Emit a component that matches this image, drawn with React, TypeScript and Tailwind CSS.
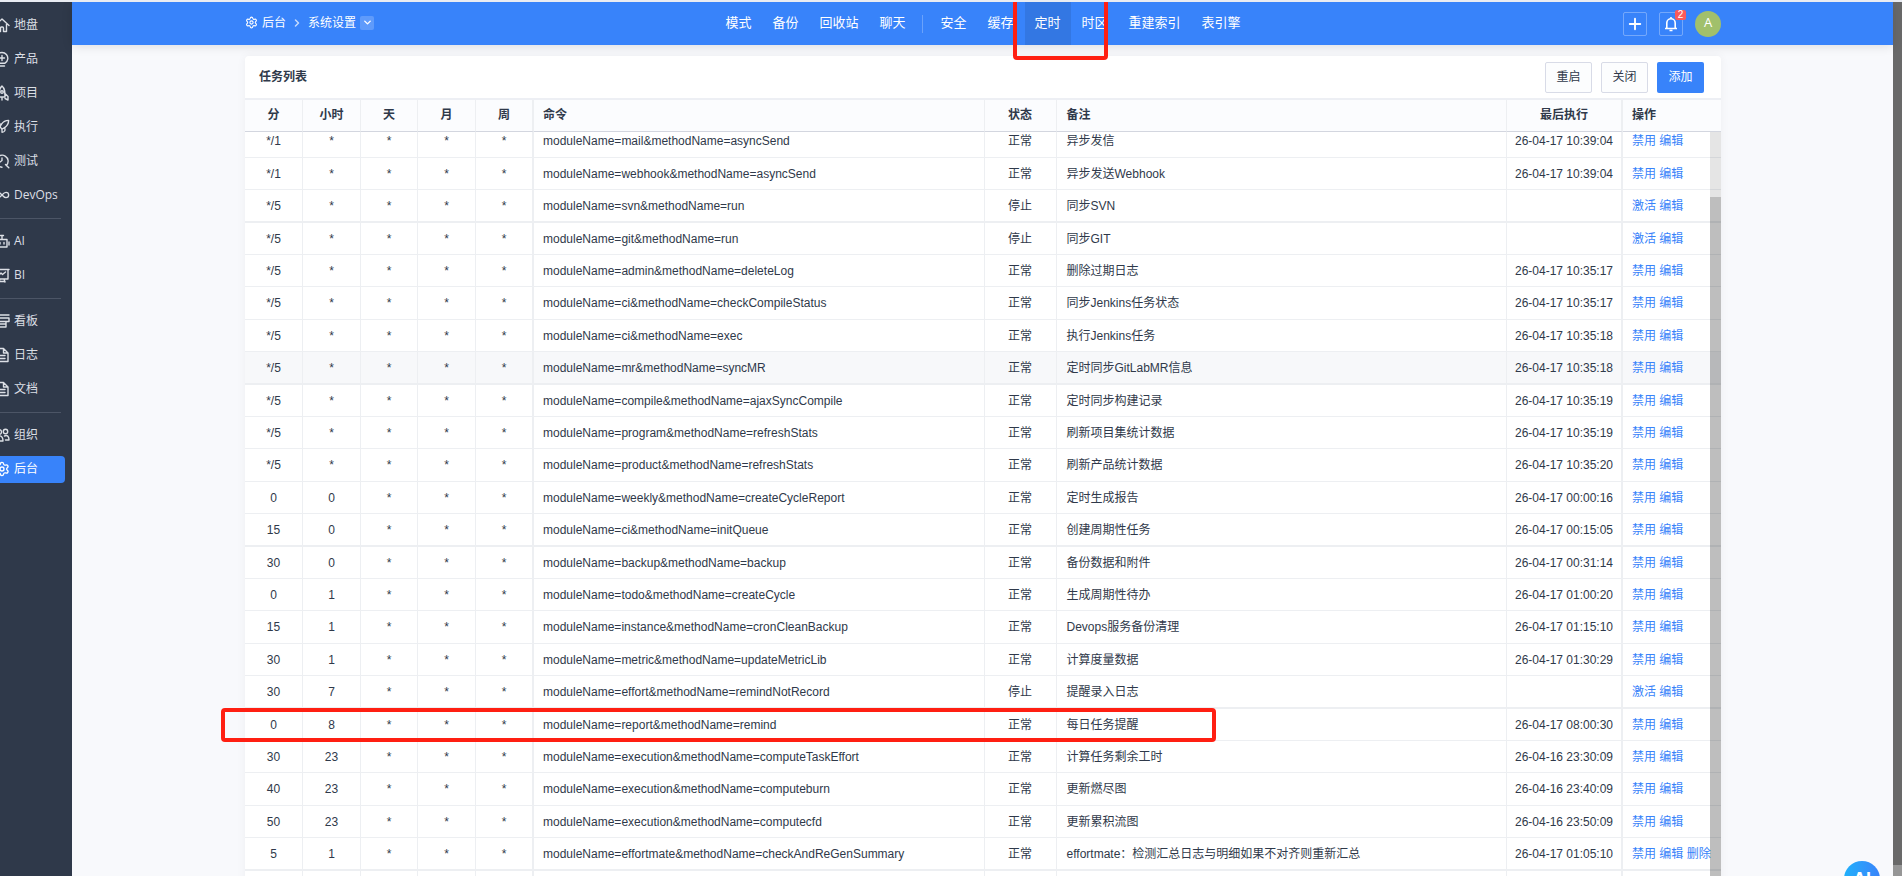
import React from "react";
import type { ReactNode } from "react";
import { Rocket, Infinity as InfinityIcon, Settings, ChevronRight, ChevronDown, Plus, Bell } from "lucide-react";

function Glyph({ children }: { children: ReactNode }) {
  return (
    <svg viewBox="0 0 16 16" fill="none" stroke="currentColor" strokeWidth="1.4" strokeLinejoin="round" strokeLinecap="round" className="size-4" aria-hidden="true">
      {children}
    </svg>
  );
}

const homeIcon = <Glyph><path d="M1 8.5 8 2l7 6.500M3.500 7v7.500H6.500V11a1 1 0 0 1 1-1h1a1 1 0 0 1 1 1v3.500h3V7" /></Glyph>;
const bulbIcon = <Glyph><path d="M5 12.200a5.800 5.800 0 1 1 6 0M5 12.200h6M5.500 15h5M8 4.500v5M5.500 7h5" /></Glyph>;
const projectIcon = <Glyph><path d="M8 1C5 3.500 5 7 5 12h6c0-5 0-8.500-3-11zM5 8.500 2 11.500V15l3-1.500M11 8.500l3 3V15l-3-1.500M8 12v3" /><circle cx="8" cy="7" r="1.300" /></Glyph>;
const testIcon = <Glyph><path d="M12.300 12.500A6 6 0 1 0 8 14.200M11.500 11.500l3.300 3.300M8 5v2.500L6 9" /></Glyph>;
const botIcon = <Glyph><path d="M3 6.500h10V14H3zM8 6.500V3M6.500 2.500h3M1 9v3M15 9v3M6 9.500v1.500M10 9.500v1.500" /></Glyph>;
const chartIcon = <Glyph><path d="M1 2.500h14M2 2.500v9.500h12V2.500M5 8l2-2 1.500 1.500L11.500 5M6 12l-1 3M10 12l1 3M5 14.500h6" /></Glyph>;
const boardIcon = <Glyph><path d="M1 2h14M1 5h14v3.500H1zM3 8.500h9V14H3zM3 11h9" /></Glyph>;
const fileIcon = <Glyph><path d="M2 1.500h7.500L14 6v8.500H2zM9.500 1.500V6H14M5 8.500h6M5 11.500h6" /></Glyph>;
const usersIcon = <Glyph><circle cx="5" cy="5" r="2.500" /><circle cx="11.500" cy="4.500" r="2.200" /><path d="M1 14c0-7 8-7 8 0zM10.500 9c3-1.500 4.500 1 4.500 4h-3.500" /></Glyph>;

type MenuItem = { label: string; icon: ReactNode; active?: boolean };

const menuGroups: MenuItem[][] = [
  [
    { label: "地盘", icon: homeIcon },
    { label: "产品", icon: bulbIcon },
    { label: "项目", icon: projectIcon },
    { label: "执行", icon: <Rocket className="size-4" /> },
    { label: "测试", icon: testIcon },
    { label: "DevOps", icon: <InfinityIcon className="size-4" /> },
  ],
  [
    { label: "AI", icon: botIcon },
    { label: "BI", icon: chartIcon },
  ],
  [
    { label: "看板", icon: boardIcon },
    { label: "日志", icon: fileIcon },
    { label: "文档", icon: fileIcon },
  ],
  [
    { label: "组织", icon: usersIcon },
    { label: "后台", icon: <Settings className="size-4" />, active: true },
  ],
];

const navGroups = [
  ["模式", "备份", "回收站", "聊天"],
  ["安全", "缓存", "定时", "时区", "重建索引", "表引擎"],
];

type Job = {
  minute: string;
  hour: string;
  command: string;
  note: string;
  last: string;
  stopped?: boolean;
  removable?: boolean;
  hovered?: boolean;
};

const job = (minute: string, hour: string, module: string, method: string, note: string, last: string, extra: Partial<Job> = {}): Job => ({
  minute, hour, command: `moduleName=${module}&methodName=${method}`, note, last, ...extra,
});

const jobs: Job[] = [
  job("*/1", "*", "mail", "asyncSend", "异步发信", "26-04-17 10:39:04"),
  job("*/1", "*", "webhook", "asyncSend", "异步发送Webhook", "26-04-17 10:39:04"),
  job("*/5", "*", "svn", "run", "同步SVN", "", { stopped: true }),
  job("*/5", "*", "git", "run", "同步GIT", "", { stopped: true }),
  job("*/5", "*", "admin", "deleteLog", "删除过期日志", "26-04-17 10:35:17"),
  job("*/5", "*", "ci", "checkCompileStatus", "同步Jenkins任务状态", "26-04-17 10:35:17"),
  job("*/5", "*", "ci", "exec", "执行Jenkins任务", "26-04-17 10:35:18"),
  job("*/5", "*", "mr", "syncMR", "定时同步GitLabMR信息", "26-04-17 10:35:18", { hovered: true }),
  job("*/5", "*", "compile", "ajaxSyncCompile", "定时同步构建记录", "26-04-17 10:35:19"),
  job("*/5", "*", "program", "refreshStats", "刷新项目集统计数据", "26-04-17 10:35:19"),
  job("*/5", "*", "product", "refreshStats", "刷新产品统计数据", "26-04-17 10:35:20"),
  job("0", "0", "weekly", "createCycleReport", "定时生成报告", "26-04-17 00:00:16"),
  job("15", "0", "ci", "initQueue", "创建周期性任务", "26-04-17 00:15:05"),
  job("30", "0", "backup", "backup", "备份数据和附件", "26-04-17 00:31:14"),
  job("0", "1", "todo", "createCycle", "生成周期性待办", "26-04-17 01:00:20"),
  job("15", "1", "instance", "cronCleanBackup", "Devops服务备份清理", "26-04-17 01:15:10"),
  job("30", "1", "metric", "updateMetricLib", "计算度量数据", "26-04-17 01:30:29"),
  job("30", "7", "effort", "remindNotRecord", "提醒录入日志", "", { stopped: true }),
  job("0", "8", "report", "remind", "每日任务提醒", "26-04-17 08:00:30"),
  job("30", "23", "execution", "computeTaskEffort", "计算任务剩余工时", "26-04-16 23:30:09"),
  job("40", "23", "execution", "computeburn", "更新燃尽图", "26-04-16 23:40:09"),
  job("50", "23", "execution", "computecfd", "更新累积流图", "26-04-16 23:50:09"),
  job("5", "1", "effortmate", "checkAndReGenSummary", "effortmate：检测汇总日志与明细如果不对齐则重新汇总", "26-04-17 01:05:10", { removable: true }),
];

function Sidebar() {
  return (
    <aside className="w-[72px] shrink-0 bg-[#2f394a] pt-[6px] font-['Open_Sans','Noto_Sans_CJK_SC',sans-serif] leading-4 text-[#dcdfe5]">
      {menuGroups.map((group, i) => (
        <ul key={i} className={i ? "mt-[6px] mr-[11px] border-t border-[#4c5566] pt-[5px]" : "mr-[11px]"}>
          {group.map(({ label, icon, active }) => (
            <li key={label} className="-mr-1 flex h-[34px] items-center">
              <a
                href="#"
                className={
                  active
                    ? "flex h-[27px] w-full items-center gap-1 rounded-r bg-[#3883fa] text-white"
                    : "flex h-[27px] w-full items-center gap-1"
                }
              >
                <span className="-ml-[6px] shrink-0">{icon}</span>
                <span>{label}</span>
              </a>
            </li>
          ))}
        </ul>
      ))}
    </aside>
  );
}

function TopBar() {
  return (
    <header className="relative grid h-[43px] grid-cols-[1fr_auto_1fr] items-center bg-[#3883fa] pr-[172px] pl-[173px] text-white shadow-[0_1px_10px_rgba(0,0,0,0.12)]">
      <nav className="flex items-center pb-[2px]" aria-label="breadcrumb">
        <Settings className="size-[13px]" />
        <a href="#" className="ml-1">后台</a>
        <ChevronRight className="mx-[5px] size-3 opacity-70" strokeWidth={3} />
        <a href="#">系统设置</a>
        <button type="button" aria-label="切换" className="ml-1 grid size-[14px] place-items-center rounded-xs bg-white/20">
          <ChevronDown className="size-[11px]" strokeWidth={3} />
        </button>
      </nav>
      <nav className="flex h-full items-center text-[13px]">
        {navGroups.map((group, i) => (
          <div key={i} className="flex h-full items-center">
            {i > 0 && <span className="mx-[7px] h-[18px] w-px bg-white/25" />}
            <div className="flex h-full gap-px">
              {group.map((label) => (
                <a
                  key={label}
                  href="#"
                  className={
                    label === "定时"
                      ? "flex items-center bg-[#3377e3] px-[10px] pb-[2px]"
                      : "flex items-center px-[10px] pb-[2px]"
                  }
                >
                  {label}
                </a>
              ))}
            </div>
          </div>
        ))}
      </nav>
      <div className="flex items-center justify-end gap-3">
        <button type="button" aria-label="新建" className="grid size-6 place-items-center rounded-xs border border-white/30">
          <Plus className="size-[18px]" strokeWidth={2.5} />
        </button>
        <button type="button" aria-label="消息" className="relative grid size-6 place-items-center rounded-xs border border-white/30">
          <svg viewBox="0 0 16 16" fill="none" stroke="currentColor" strokeWidth="1.600" className="size-4" aria-hidden="true">
            <path d="M2 12.500h12M3.800 12.500V7a4.200 4.200 0 0 1 8.400 0v5.500M8 2.800V1M6.500 14.500h3" />
          </svg>
          <span className="absolute -top-[3px] -right-1 h-[10px] w-[11px] rounded-xs bg-[#fb5a5a] text-center text-[10px] leading-[10px]">2</span>
        </button>
        <a href="#" className="grid size-[26px] place-items-center rounded-full bg-[#a1c06b] pb-[2px] font-['Open_Sans',sans-serif] text-[13px]">A</a>
      </div>
    </header>
  );
}

const cell = "border-r border-[#edeff2] text-center";
const thick = "border-r-2 border-[#edeff2]";

function JobTable() {
  return (
    <table className="w-full table-fixed border-separate border-spacing-0">
      <colgroup>
        <col className="w-[58px]" />
        <col className="w-[58px]" />
        <col className="w-[57px]" />
        <col className="w-[58px]" />
        <col className="w-[58px]" />
        <col />
        <col className="w-[72px]" />
        <col />
        <col className="w-[116px]" />
        <col className="w-[98px]" />
      </colgroup>
      <thead>
        <tr className="h-8 bg-[#fbfcfe] text-[#2f394a] [&>th]:border-b [&>th]:border-b-[#d3d6df] [&>th]:pb-[2px]">
          <th className={cell}>分</th>
          <th className={cell}>小时</th>
          <th className={cell}>天</th>
          <th className={cell}>月</th>
          <th className={`${thick} text-center`}>周</th>
          <th className="border-r border-[#edeff2] pl-[9px] text-left">命令</th>
          <th className={cell}>状态</th>
          <th className="border-r border-[#edeff2] pl-[10px] text-left">备注</th>
          <th className={`${thick} text-center`}>最后执行</th>
          <th className="pl-[9px] text-left">操作</th>
        </tr>
      </thead>
      <tbody className="[&_td]:border-b [&_td]:border-b-[#edeff2] [&>tr]:h-8 [&>tr:first-child]:h-[26px]! [&>tr:first-child>td]:pb-[7px] [&>tr:nth-child(5n+1)]:h-[33px] [&>tr:nth-child(5n+3)]:h-[33px] [&>tr:nth-child(5n+3)>td]:border-b-2">
        {jobs.map((row) => (
          <tr key={row.command} className={row.hovered ? "bg-[#f7f8fa]" : "bg-white"}>
            <td className={cell}>{row.minute}</td>
            <td className={cell}>{row.hour}</td>
            <td className={cell}>*</td>
            <td className={cell}>*</td>
            <td className={`${thick} text-center`}>*</td>
            <td className="truncate border-r border-[#edeff2] pl-[9px]">{row.command}</td>
            <td className={cell}>{row.stopped ? "停止" : "正常"}</td>
            <td className="truncate border-r border-[#edeff2] pl-[10px]">{row.note}</td>
            <td className={`${thick} text-center whitespace-nowrap`}>{row.last}</td>
            <td className="pl-[9px] whitespace-nowrap text-[#3883fa]">
              <a href="#">{row.stopped ? "激活" : "禁用"}</a> <a href="#">编辑</a>
              {row.removable && <> <a href="#">删除</a></>}
            </td>
          </tr>
        ))}
        <tr className="bg-white">
          <td className={cell} />
          <td className={cell} />
          <td className={cell} />
          <td className={cell} />
          <td className={thick} />
          <td className={cell} />
          <td className={cell} />
          <td className={cell} />
          <td className={thick} />
          <td />
        </tr>
      </tbody>
    </table>
  );
}

export default function App() {
  return (
    <div className="relative flex h-screen flex-col overflow-hidden border-t-2 border-[#e9ecf2] bg-[#f8f9fc] font-['Liberation_Sans','Noto_Sans_CJK_SC',sans-serif] text-xs text-[#2f394a]">
      <div className="flex min-h-0 flex-1">
        <Sidebar />
        <div className="min-w-0 flex-1">
          <TopBar />
          <main className="pt-[11px] pr-[172px] pl-[173px]">
            <section className="relative rounded-sm bg-white shadow-[0_0_10px_rgba(0,0,0,0.05)]">
              <div className="flex h-[42px] items-center justify-between pr-[17px] pl-[14px]">
                <h1 className="font-bold">任务列表</h1>
                <div className="flex gap-[9px]">
                  <button type="button" className="h-[31px] w-[47px] rounded-xs border border-[#d8dbe7] bg-[#fcfdfe]">重启</button>
                  <button type="button" className="h-[31px] w-[47px] rounded-xs border border-[#d8dbe7] bg-[#fcfdfe]">关闭</button>
                  <button type="button" className="h-[31px] w-[47px] rounded-xs bg-[#3883fa] text-white">添加</button>
                </div>
              </div>
              <div className="border-t-2 border-[#edeff4]">
                <JobTable />
              </div>
              <div className="absolute top-[76px] right-0 bottom-0 w-[11px] bg-black/10">
                <div className="mt-[65px] h-full bg-black/17" />
              </div>
            </section>
          </main>
        </div>
        <div className="w-[9px] shrink-0 bg-[#969696]">
          <div className="h-[863px] bg-[#696969]" />
        </div>
      </div>

      <button type="button" className="absolute top-[859px] right-[22px] size-9 rounded-full bg-linear-to-r from-[#1fb0fb] to-[#3883fa] text-lg font-bold text-white">AI</button>
      <div className="pointer-events-none absolute -top-1 left-[1013px] h-[62px] w-[95px] rounded-sm border-4 border-[#ff1f12]" />
      <div className="pointer-events-none absolute top-[706px] left-[221px] h-[34px] w-[995px] rounded-sm border-4 border-[#ff1f12]" />
    </div>
  );
}
